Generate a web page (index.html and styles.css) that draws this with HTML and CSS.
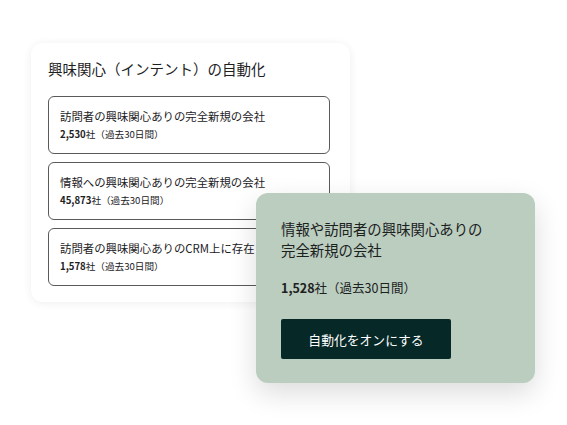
FILE: index.html
```html
<!DOCTYPE html>
<html lang="ja">
<head>
<meta charset="utf-8">
<link rel="stylesheet" href="styles.css">
</head>
<body>
<div class="stage">
  <section class="card">
    <h1 class="card-title">興味関心（インテント）の自動化</h1>
    <div class="list">
      <div class="item">
        <div class="item-title">訪問者の興味関心ありの完全新規の会社</div>
        <div class="item-sub"><b>2,530</b>社（過去30日間）</div>
      </div>
      <div class="item">
        <div class="item-title">情報への興味関心ありの完全新規の会社</div>
        <div class="item-sub"><b>45,873</b>社（過去30日間）</div>
      </div>
      <div class="item">
        <div class="item-title">訪問者の興味関心ありのCRM上に存在</div>
        <div class="item-sub"><b>1,578</b>社（過去30日間）</div>
      </div>
    </div>
  </section>
  <section class="popup">
    <div class="popup-title"><span class="line">情報や訪問者の興味関心ありの</span><span class="line">完全新規の会社</span></div>
    <div class="popup-count"><b>1,528</b>社（過去30日間）</div>
    <button class="popup-btn">自動化をオンにする</button>
  </section>
</div>
</body>
</html>
```
FILE: styles.css
```css
html, body {
  margin: 0;
  padding: 0;
  background: #ffffff;
}
body {
  font-family: "Noto Sans CJK JP", "Noto Sans", sans-serif;
  color: #1c211e;
}
.stage {
  position: relative;
  width: 567px;
  height: 425px;
  overflow: hidden;
  padding-top: 43px;
  box-sizing: border-box;
}
.card {
  margin-left: 31px;
  width: 319px;
  box-sizing: border-box;
  padding: 16px 20px 16px 17px;
  background: #ffffff;
  border-radius: 12px;
  box-shadow: 0 1px 10px rgba(0, 0, 0, 0.07);
}
.card-title {
  margin: 0 0 17px 0;
  font-size: 14.5px;
  line-height: 20px;
  font-weight: 400;
  letter-spacing: 0;
}
.list {
  display: flex;
  flex-direction: column;
  gap: 8px;
}
.item {
  height: 58px;
  box-sizing: border-box;
  border: 1px solid #5a5a5a;
  border-radius: 6px;
  padding: 11px 11px 0 11px;
  overflow: hidden;
}
.item-title {
  font-size: 11.4px;
  line-height: 17px;
  white-space: nowrap;
}
.item-sub {
  margin-top: 2px;
  font-size: 9.6px;
  line-height: 14px;
}
.item-sub b {
  font-weight: 700;
}
.popup {
  position: absolute;
  left: 256px;
  top: 193px;
  width: 279px;
  height: 190px;
  box-sizing: border-box;
  padding: 25px 20px 0 25px;
  background: #bacdbf;
  border-radius: 12px;
  box-shadow: 0 10px 28px rgba(0, 0, 0, 0.14);
}
.popup-title {
  font-size: 14.4px;
  line-height: 21px;
}
.popup-title .line {
  display: block;
}
.popup-count {
  margin-top: 19px;
  font-size: 12.5px;
  line-height: 18px;
}
.popup-count b {
  font-weight: 700;
}
.popup-btn {
  display: block;
  margin-top: 22px;
  width: 170px;
  height: 40px;
  border: none;
  border-radius: 2px;
  background: #062826;
  color: #ffffff;
  font-family: "Noto Sans CJK JP", "Noto Sans", sans-serif;
  font-size: 12.8px;
  padding: 0;
}
```
